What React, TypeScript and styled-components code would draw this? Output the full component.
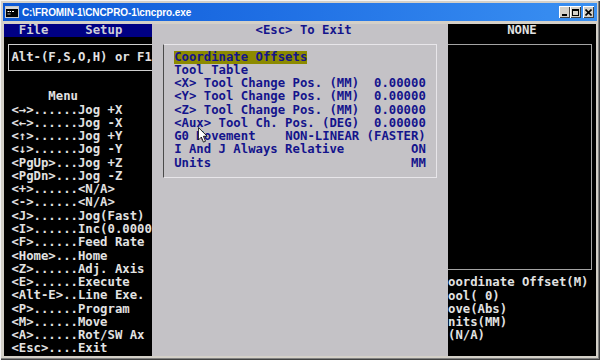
import React from "react";
import styled, { createGlobalStyle } from "styled-components";

const CW = 7.4;
const RH = 13.28;
const MONO = `"DejaVu Sans Mono", "Liberation Mono", monospace`;

const GlobalStyle = createGlobalStyle`
  html, body { margin: 0; padding: 0; background: #d4d0c8; }
  body { width: 600px; height: 360px; overflow: hidden; }
`;

const Window = styled.div`
  width: 600px;
  height: 360px;
  box-sizing: border-box;
  padding: 3px 3px 0 3px;
  background: #d4d0c8;
  box-shadow: inset 1px 1px #f4f4f4, inset -1px -1px #404040, inset -2px -2px #808080;
  display: flex;
  flex-direction: column;
`;

const TitleBar = styled.div`
  height: 18px;
  margin-bottom: 3px;
  display: flex;
  align-items: center;
  gap: 3px;
  padding: 0 3px 0 2px;
  background: linear-gradient(to right, #0c58d6 0%, #1f6fe4 45%, #3a90f2 100%);
`;

const TitleText = styled.span`
  flex: 1;
  color: #ffffff;
  font-family: "Liberation Sans", Arial, sans-serif;
  font-weight: bold;
  font-size: 10px;
  letter-spacing: -0.1px;
  white-space: nowrap;
`;

const WinButtons = styled.div`
  display: flex;
  align-items: center;
`;

const WinButton = styled.div<{ $gap?: boolean }>`
  width: 11px;
  height: 12px;
  margin-left: ${(p) => (p.$gap ? "2px" : "0")};
  box-sizing: border-box;
  background: #d4d0c8;
  box-shadow: inset 1px 1px #ffffff, inset -1px -1px #404040;
  display: flex;
  align-items: center;
  justify-content: center;
`;

const Console = styled.div`
  margin: 0 1px;
  height: 332px;
  background: #000000;
  display: grid;
  grid-template-columns: ${CW * 20}px ${CW * 40}px ${CW * 20}px;
  font-family: ${MONO};
  font-size: 12.29px;
  font-weight: bold;
  overflow: hidden;
`;

const Pane = styled.div`
  display: flex;
  flex-direction: column;
  overflow: hidden;
  color: #e2e2e2;
`;

const Line = styled.div<{ $bg?: string; $color?: string }>`
  height: ${RH}px;
  line-height: ${RH}px;
  white-space: pre;
  overflow: hidden;
  flex-shrink: 0;
  background: ${(p) => p.$bg || "transparent"};
  color: ${(p) => p.$color || "inherit"};
`;

const HintArea = styled.div`
  height: ${RH * 3}px;
  flex-shrink: 0;
`;

const HintBox = styled.div`
  box-sizing: border-box;
  margin: ${RH / 2}px 0 0 ${CW / 2}px;
  width: 200px;
  height: ${RH * 2 + 1}px;
  border: 1px solid #cfcfcf;
  padding: ${RH / 2 - 1}px 0 0 ${CW / 2 - 1}px;
`;

const Dialog = styled.div`
  position: relative;
  background: #c4c2c6;
  color: #14148c;
  display: flex;
  flex-direction: column;
  overflow: hidden;
`;

const OptionsBox = styled.div`
  box-sizing: border-box;
  margin: ${RH / 2}px 0 0 ${CW * 1.5}px;
  width: ${CW * 37}px;
  height: ${RH * 10 + 1}px;
  border: 1px solid #e8e6ea;
  border-left-color: #4a4a4a;
  padding: ${RH / 2 - 1}px 0 0 ${CW * 1.5 - 1}px;
  display: flex;
  flex-direction: column;
`;

const Option = styled.div`
  width: ${CW * 34}px;
  height: ${RH}px;
  line-height: ${RH}px;
  display: flex;
  justify-content: space-between;
  white-space: pre;
`;

const Highlight = styled.span`
  background: #8c8a00;
`;

const Cursor = styled.svg`
  position: absolute;
  left: 46px;
  top: 103px;
`;

const RightBox = styled.div`
  box-sizing: border-box;
  margin: ${RH / 2}px 0 ${RH / 2}px ${-CW / 2}px;
  width: ${CW * 20}px;
  height: ${RH * 17}px;
  flex-shrink: 0;
  border: 1px solid #a4a4a4;
`;

const menuLines = [
  " <→>......Jog +X",
  " <←>......Jog -X",
  " <↑>......Jog +Y",
  " <↓>......Jog -Y",
  " <PgUp>...Jog +Z",
  " <PgDn>...Jog -Z",
  " <+>......<N/A>",
  " <->......<N/A>",
  " <J>......Jog(Fast)",
  " <I>......Inc(0.0000",
  " <F>......Feed Rate",
  " <Home>...Home",
  " <Z>......Adj. Axis",
  " <E>......Execute",
  " <Alt-E>..Line Exe.",
  " <P>......Program",
  " <M>......Move",
  " <A>......Rot/SW Ax",
  " <Esc>....Exit",
];

const options: [string, string, boolean?][] = [
  ["Coordinate Offsets", "", true],
  ["Tool Table", ""],
  ["<X> Tool Change Pos. (MM)", "0.00000"],
  ["<Y> Tool Change Pos. (MM)", "0.00000"],
  ["<Z> Tool Change Pos. (MM)", "0.00000"],
  ["<Aux> Tool Ch. Pos. (DEG)", "0.00000"],
  ["G0 Movement", "NON-LINEAR (FASTER)"],
  ["I And J Always Relative", "ON"],
  ["Units", "MM"],
];

const statusLines = ["oordinate Offset(M)", "ool( 0)", "ove(Abs)", "nits(MM)", "(N/A)"];

const AppIcon = () => (
  <svg width="14" height="12" viewBox="0 0 14 12">
    <rect x="0.5" y="0.5" width="13" height="11" fill="#000" stroke="#c8c8c8" />
    <rect x="1" y="1" width="12" height="2" fill="#d8d8d8" />
    <rect x="2.5" y="5" width="2" height="1" fill="#fff" />
    <rect x="5" y="5" width="1" height="1" fill="#fff" />
    <rect x="7" y="5" width="2" height="1" fill="#fff" />
    <rect x="2.5" y="7.5" width="3" height="1" fill="#aaa" />
  </svg>
);

export default function App() {
  return (
    <>
      <GlobalStyle />
      <Window>
        <TitleBar>
          <AppIcon />
          <TitleText>C:\FROMIN-1\CNCPRO-1\cncpro.exe</TitleText>
          <WinButtons>
            <WinButton>
              <svg width="7" height="7" viewBox="0 0 7 7">
                <rect x="1" y="5" width="5" height="2" fill="#000" />
              </svg>
            </WinButton>
            <WinButton>
              <svg width="7" height="7" viewBox="0 0 7 7">
                <rect x="0.5" y="0.5" width="6" height="6" fill="none" stroke="#000" />
                <rect x="0" y="0" width="7" height="2" fill="#000" />
              </svg>
            </WinButton>
            <WinButton $gap>
              <svg width="7" height="7" viewBox="0 0 7 7">
                <path d="M0.5 0.5 L6.5 6.5 M6.5 0.5 L0.5 6.5" stroke="#000" strokeWidth="1.6" />
              </svg>
            </WinButton>
          </WinButtons>
        </TitleBar>
        <Console>
          <Pane>
            <Line $bg="#000084" $color="#cfcfd8">{"  File     Setup"}</Line>
            <HintArea>
              <HintBox>
                <Line>Alt-(F,S,O,H) or F1</Line>
              </HintBox>
            </HintArea>
            <Line> </Line>
            <Line>{"      Menu"}</Line>
            {menuLines.map((l, i) => (
              <Line key={i}>{l}</Line>
            ))}
          </Pane>
          <Dialog>
            <Line>{"              <Esc> To Exit"}</Line>
            <OptionsBox>
              {options.map(([label, value, hl], i) => (
                <Option key={i}>
                  {hl ? <Highlight>{label}</Highlight> : <span>{label}</span>}
                  <span>{value}</span>
                </Option>
              ))}
            </OptionsBox>
            <Cursor width="10" height="16" viewBox="0 0 12 19">
              <path
                d="M0.5 0.5 L0.5 15.5 L4 12 L6.5 18 L9 17 L6.5 11 L11 11 Z"
                fill="#ffffff"
                stroke="#000000"
                strokeWidth="1"
                strokeLinejoin="miter"
              />
            </Cursor>
          </Dialog>
          <Pane>
            <Line>{"        NONE"}</Line>
            <RightBox />
            {statusLines.map((l, i) => (
              <Line key={i}>{l}</Line>
            ))}
          </Pane>
        </Console>
      </Window>
    </>
  );
}
